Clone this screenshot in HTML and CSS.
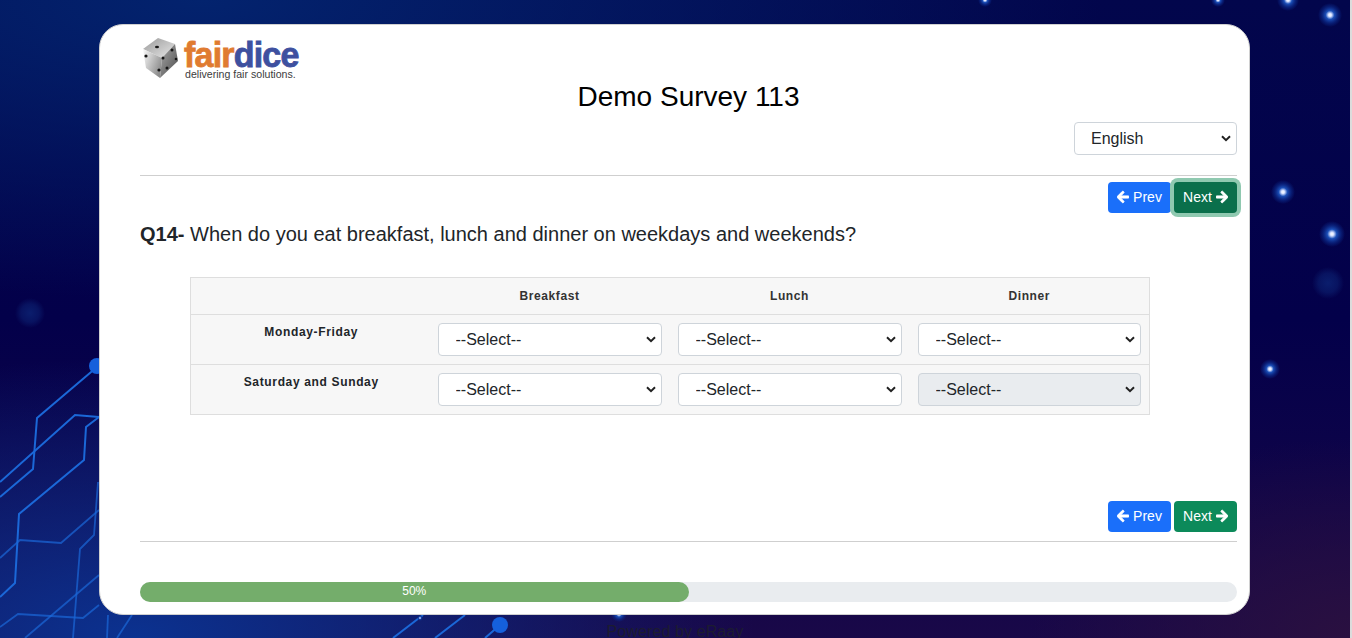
FILE: index.html
```html
<!DOCTYPE html>
<html lang="en">
<head>
<meta charset="utf-8">
<title>Demo Survey 113</title>
<link rel="stylesheet" href="styles.css">
</head>
<body>
<svg class="backdrop" width="1350" height="638" viewBox="0 0 1350 638" aria-hidden="true">
  <defs>
    <radialGradient id="star">
      <stop offset="0" stop-color="#ffffff"/>
      <stop offset="0.14" stop-color="#d5e0ff"/>
      <stop offset="0.36" stop-color="#1b4fb8"/>
      <stop offset="0.72" stop-color="#0b2a8a" stop-opacity="0.6"/>
      <stop offset="1" stop-color="#0b2a8a" stop-opacity="0"/>
    </radialGradient>
    <radialGradient id="blob">
      <stop offset="0" stop-color="#0e2a7c" stop-opacity="0.7"/>
      <stop offset="0.6" stop-color="#0e2a7c" stop-opacity="0.45"/>
      <stop offset="1" stop-color="#0e2a7c" stop-opacity="0"/>
    </radialGradient>
  </defs>
  <circle cx="30" cy="313" r="15" fill="url(#blob)"/>
  <circle cx="1328" cy="283" r="16" fill="url(#blob)"/>
  <g fill="none" stroke="#1b68d8" stroke-width="2">
    <path d="M97 367 37 418 33 469 0 497"/>
    <path d="M0 482 75 415 99 417"/>
    <path d="M99 417 86 427 84 460 19 514 15 583 0 597"/>
  </g>
  <g fill="none" stroke="#1b68d8" stroke-width="1.8" stroke-opacity="0.7">
    <path d="M0 558 20 540 61 543 99 510"/>
    <path d="M98 482 94 535 80 549 73 638"/>
    <path d="M25 638 99 575"/>
    <path d="M0 627 18 614 83 618 99 605"/>
    <path d="M107 638 108 615"/>
    <path d="M117 638 132 615"/>
  </g>
  <g fill="none" stroke="#1b68d8" stroke-width="2">
    <path d="M393 638 423 615"/>
    <path d="M435 638 465 615"/>
    <path d="M485 638 500 625"/>
  </g>
  <circle cx="97" cy="366" r="8" fill="#1560dc"/>
  <circle cx="500" cy="625" r="8" fill="#1560dc"/>
  <circle cx="1288" cy="0" r="11" fill="url(#star)"/>
  <circle cx="1330" cy="15" r="12" fill="url(#star)"/>
  <circle cx="1283" cy="192" r="12" fill="url(#star)"/>
  <circle cx="1332" cy="234" r="13" fill="url(#star)"/>
  <circle cx="1270" cy="369" r="10" fill="url(#star)"/>
  <circle cx="1218" cy="0" r="7" fill="url(#star)"/>
  <circle cx="985" cy="0" r="7" fill="url(#star)"/>
  <circle cx="619" cy="614" r="8" fill="url(#star)"/>
  <circle cx="420" cy="618" r="3" fill="url(#star)"/>
</svg>

<main class="card">
  <div class="logo">
    <svg class="dice" width="38" height="42" viewBox="0 0 38 42" aria-hidden="true">
      <defs>
        <linearGradient id="faceTop" x1="0" y1="0" x2="1" y2="1">
          <stop offset="0" stop-color="#9a9a9a"/><stop offset="1" stop-color="#e8e8e8"/>
        </linearGradient>
        <linearGradient id="faceLeft" x1="0" y1="0" x2="1" y2="0.6">
          <stop offset="0" stop-color="#fafafa"/><stop offset="1" stop-color="#8c8c8c"/>
        </linearGradient>
        <linearGradient id="faceRight" x1="0" y1="0" x2="1" y2="1">
          <stop offset="0" stop-color="#a8a8a8"/><stop offset="1" stop-color="#4c4c4c"/>
        </linearGradient>
      </defs>
      <path d="M17 1 34 7 21 21 2 12Z" fill="url(#faceTop)"/>
      <path d="M2 12 21 21 19 41 5 31Z" fill="url(#faceLeft)"/>
      <path d="M34 7 37 24 19 41 21 21Z" fill="url(#faceRight)"/>
      <g fill="#151515">
        <ellipse cx="16" cy="10" rx="2" ry="1.2"/>
        <circle cx="5" cy="19" r="1.6"/>
        <circle cx="18" cy="33" r="1.6"/>
        <circle cx="31" cy="13" r="1.5"/>
        <circle cx="22" cy="21" r="1.5"/>
        <circle cx="35" cy="22" r="1.3"/>
        <circle cx="26" cy="31" r="1.5"/>
      </g>
    </svg>
    <div class="logo-text">
      <div class="wordmark"><span class="word-fair">fair</span><span class="word-dice">dice</span></div>
      <div class="tagline">delivering fair solutions.</div>
    </div>
  </div>

  <h1 class="title">Demo Survey 113</h1>

  <div class="lang-row">
    <select class="select lang"><option>English</option></select>
  </div>

  <hr class="rule rule-top">

  <div class="nav">
    <button class="btn btn-prev" type="button">
      <svg class="arrow" viewBox="0 0 448 512" aria-hidden="true"><path d="M257.5 445.1l-22.2 22.2c-9.4 9.4-24.6 9.4-33.9 0L7 273c-9.4-9.4-9.4-24.6 0-33.9L201.4 44.7c9.4-9.4 24.6-9.4 33.9 0l22.2 22.2c9.5 9.5 9.3 25-.4 34.3L136.6 216H424c13.3 0 24 10.7 24 24v32c0 13.3-10.7 24-24 24H136.6l120.5 114.8c9.8 9.3 10 24.8.4 34.3z"/></svg>
      Prev
    </button>
    <button class="btn btn-next is-focus" type="button">
      Next
      <svg class="arrow" viewBox="0 0 448 512" aria-hidden="true"><path d="M190.5 66.9l22.2-22.2c9.4-9.4 24.6-9.4 33.9 0L441 239c9.4 9.4 9.4 24.6 0 33.9L246.6 467.3c-9.4 9.4-24.6 9.4-33.9 0l-22.2-22.2c-9.5-9.5-9.3-25 .4-34.3L311.4 296H24c-13.3 0-24-10.7-24-24v-32c0-13.3 10.7-24 24-24h287.4L190.9 101.2c-9.8-9.3-10-24.8-.4-34.3z"/></svg>
    </button>
  </div>

  <p class="question"><strong>Q14-</strong> When do you eat breakfast, lunch and dinner on weekdays and weekends?</p>

  <table class="grid">
    <thead>
      <tr>
        <th class="col-label"></th>
        <th class="col-head">Breakfast</th>
        <th class="col-head">Lunch</th>
        <th class="col-head">Dinner</th>
      </tr>
    </thead>
    <tbody>
      <tr>
        <th class="row-head">Monday-Friday</th>
        <td><select class="select"><option>--Select--</option></select></td>
        <td><select class="select"><option>--Select--</option></select></td>
        <td><select class="select"><option>--Select--</option></select></td>
      </tr>
      <tr>
        <th class="row-head">Saturday and Sunday</th>
        <td><select class="select"><option>--Select--</option></select></td>
        <td><select class="select"><option>--Select--</option></select></td>
        <td><select class="select is-disabled" disabled><option>--Select--</option></select></td>
      </tr>
    </tbody>
  </table>

  <div class="nav nav-bottom">
    <button class="btn btn-prev" type="button">
      <svg class="arrow" viewBox="0 0 448 512" aria-hidden="true"><path d="M257.5 445.1l-22.2 22.2c-9.4 9.4-24.6 9.4-33.9 0L7 273c-9.4-9.4-9.4-24.6 0-33.9L201.4 44.7c9.4-9.4 24.6-9.4 33.9 0l22.2 22.2c9.5 9.5 9.3 25-.4 34.3L136.6 216H424c13.3 0 24 10.7 24 24v32c0 13.3-10.7 24-24 24H136.6l120.5 114.8c9.8 9.3 10 24.8.4 34.3z"/></svg>
      Prev
    </button>
    <button class="btn btn-next" type="button">
      Next
      <svg class="arrow" viewBox="0 0 448 512" aria-hidden="true"><path d="M190.5 66.9l22.2-22.2c9.4-9.4 24.6-9.4 33.9 0L441 239c9.4 9.4 9.4 24.6 0 33.9L246.6 467.3c-9.4 9.4-24.6 9.4-33.9 0l-22.2-22.2c-9.5-9.5-9.3-25 .4-34.3L311.4 296H24c-13.3 0-24-10.7-24-24v-32c0-13.3 10.7-24 24-24h287.4L190.9 101.2c-9.8-9.3-10-24.8-.4-34.3z"/></svg>
    </button>
  </div>

  <hr class="rule rule-bottom">

  <div class="progress"><div class="progress-bar" style="width: 50%">50%</div></div>
</main>

<footer class="powered">Powered by eRaay</footer>
</body>
</html>
```

FILE: styles.css
```css
* { box-sizing: border-box; }

html, body {
  margin: 0;
  height: 638px;
  overflow: hidden;
}

body {
  position: relative;
  width: 1350px;
  padding-top: 24px;
  font-family: "Liberation Sans", Arial, sans-serif;
  color: #212529;
  background:
    radial-gradient(320px 200px at 100% 100%, #2a1040 0%, rgba(42, 16, 64, 0) 100%),
    radial-gradient(620px 280px at 10% 100%, #0b3290 0%, rgba(11, 50, 144, 0) 100%),
    radial-gradient(900px 300px at 15% 0%, #03236e 0%, rgba(3, 35, 110, 0) 100%),
    linear-gradient(180deg, #02064c 0%, #03004a 50%, #190848 100%);
}

html { background: #dcdcdc; }

.backdrop {
  position: absolute;
  left: 0;
  top: 0;
}

.card {
  position: relative;
  width: 1151px;
  height: 591px;
  margin-left: 99px;
  padding: 12px 12px 0 40px;
  background: #fff;
  border: 1px solid #d0d0d0;
  border-radius: 24px;
}

/* Logo */
.logo {
  display: flex;
  align-items: flex-start;
  gap: 5px;
  height: 43px;
  margin-left: 1px;
}

.logo-text { margin-top: 2px; }

.wordmark {
  font-size: 34px;
  line-height: 30px;
  font-weight: 700;
  letter-spacing: -0.8px;
  white-space: nowrap;
  transform: scaleY(1.04);
  transform-origin: 0 0;
  -webkit-text-stroke: 0.8px currentColor;
}

.word-fair { color: #e07b30; }
.word-dice { color: #3e509f; }

.tagline {
  position: relative;
  font-size: 10.6px;
  line-height: 10px;
  color: #3c3c3c;
  margin-left: 1px;
  white-space: nowrap;
}

.title {
  margin: 0;
  height: 42px;
  font-size: 28px;
  line-height: 34px;
  font-weight: 400;
  color: #000;
  text-align: center;
}

.lang-row {
  display: flex;
  justify-content: flex-end;
}

/* Selects */
.select {
  appearance: none;
  display: block;
  width: 100%;
  height: 33px;
  padding: 0 28px 0 16px;
  font-family: inherit;
  font-size: 16px;
  color: #212529;
  background-color: #fff;
  background-image: url("data:image/svg+xml,%3Csvg xmlns='http://www.w3.org/2000/svg' viewBox='0 0 10 7'%3E%3Cpath d='M1 1.2l4 4 4-4' fill='none' stroke='%23222' stroke-width='2'/%3E%3C/svg%3E");
  background-repeat: no-repeat;
  background-position: right 5px center;
  background-size: 10px 7px;
  border: 1px solid #ced4da;
  border-radius: 4px;
}

.grid .select { padding-left: 17px; }

.lang { width: 163px; }

.is-disabled {
  background-color: #e9ecef;
  opacity: 1;
}

.rule {
  height: 0;
  margin: 0;
  border: 0;
  border-top: 1px solid #cfcfcf;
}

.rule-top { margin-top: 20px; }
.rule-bottom { margin-top: 9px; }

/* Buttons */
.nav {
  display: flex;
  justify-content: flex-end;
  gap: 3px;
  margin-top: 6px;
}

.nav-bottom { margin-top: 86px; }

.btn {
  display: inline-flex;
  align-items: center;
  justify-content: center;
  gap: 4px;
  width: 63px;
  height: 31px;
  padding: 0 0 2px;
  font-family: inherit;
  font-size: 14px;
  color: #fff;
  border: 0;
  border-radius: 4px;
}

.btn-prev { background: #1a6ffa; }
.btn-next { background: #0c8a5a; }

.is-focus {
  background: #0a6f4b;
  box-shadow: 0 0 0 4px #8fc9b0;
}

.arrow {
  width: 12px;
  height: 14px;
  fill: #fff;
  stroke: #fff;
  stroke-width: 36;
}

/* Question */
.question {
  margin: 5px 0 0;
  height: 59px;
  padding-top: 1px;
  font-size: 20px;
  line-height: 30px;
}

/* Table */
.grid {
  width: 960px;
  margin-left: 50px;
  border-collapse: collapse;
  table-layout: fixed;
  background: #f7f7f7;
  border: 1px solid #dedede;
}

.grid tr { border-bottom: 1px solid #dedede; }

.col-label { width: 239px; }

.col-head {
  height: 37px;
  padding: 0 8px;
  font-size: 12px;
  letter-spacing: 0.6px;
  color: #333;
  text-align: center;
}

.row-head {
  padding: 10px 7px 0 9px;
  vertical-align: top;
  font-size: 12px;
  line-height: 15px;
  letter-spacing: 0.65px;
  text-align: center;
  color: #212529;
}

.grid td {
  padding: 8px;
  height: 50px;
}

/* Progress */
.progress {
  height: 20px;
  margin-top: 40px;
  background: #e9ecef;
  border-radius: 10px;
  overflow: hidden;
}

.progress-bar {
  height: 20px;
  font-size: 12px;
  line-height: 18px;
  color: #fff;
  text-align: center;
  background: #74ad6b;
  border-radius: 0 10px 10px 0;
}

.powered {
  position: relative;
  width: 1350px;
  padding-top: 8px;
  font-size: 16px;
  line-height: 18px;
  letter-spacing: 0.1px;
  color: #1c1c30;
  text-align: center;
}
```
